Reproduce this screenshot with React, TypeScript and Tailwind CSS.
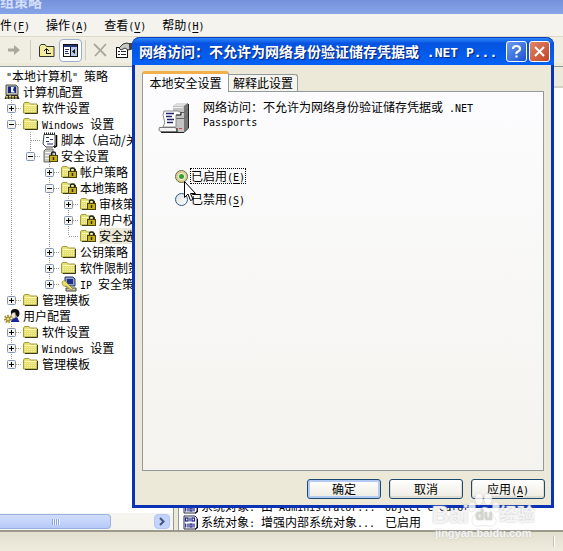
import React, { useState } from 'react';

type Guide = 'none' | 'line' | 'tee' | 'end' | 'plus' | 'plusEnd' | 'minus' | 'minusEnd';
type IconName = 'computer' | 'user' | 'folder' | 'lockFolder' | 'script' | 'server' | 'ipsec';

interface TreeRow {
  guides: Guide[];
  icon: IconName;
  latin?: string;
  label: string;
  selected?: boolean;
}

const rows: TreeRow[] = [
  { guides: [], icon: 'computer', label: '计算机配置' },
  { guides: ['plus'], icon: 'folder', label: '软件设置' },
  { guides: ['minus'], icon: 'folder', latin: 'Windows ', label: '设置' },
  { guides: ['line', 'tee'], icon: 'script', label: '脚本（启动/关机）' },
  { guides: ['line', 'minusEnd'], icon: 'server', label: '安全设置' },
  { guides: ['line', 'none', 'plus'], icon: 'lockFolder', label: '帐户策略' },
  { guides: ['line', 'none', 'minus'], icon: 'lockFolder', label: '本地策略' },
  { guides: ['line', 'none', 'line', 'plus'], icon: 'lockFolder', label: '审核策略' },
  { guides: ['line', 'none', 'line', 'plus'], icon: 'lockFolder', label: '用户权限分配' },
  { guides: ['line', 'none', 'line', 'end'], icon: 'lockFolder', label: '安全选项', selected: true },
  { guides: ['line', 'none', 'plus'], icon: 'folder', label: '公钥策略' },
  { guides: ['line', 'none', 'plus'], icon: 'folder', label: '软件限制策略' },
  { guides: ['line', 'none', 'plusEnd'], icon: 'ipsec', latin: 'IP ', label: '安全策略' },
  { guides: ['plusEnd'], icon: 'folder', label: '管理模板' },
  { guides: [], icon: 'user', label: '用户配置' },
  { guides: ['plus'], icon: 'folder', label: '软件设置' },
  { guides: ['plus'], icon: 'folder', latin: 'Windows ', label: '设置' },
  { guides: ['plusEnd'], icon: 'folder', label: '管理模板' },
];

const menus = [
  { label: '文件', key: 'F' },
  { label: '操作', key: 'A' },
  { label: '查看', key: 'V' },
  { label: '帮助', key: 'H' },
];

// Half-width characters, 6px per cell
function Mono({ children }: { children: React.ReactNode }) {
  return (
    <span className="whitespace-pre font-['DejaVu_Sans_Mono',monospace] text-[10px] leading-none">{children}</span>
  );
}

function Mnemonic({ letter }: { letter: string }) {
  return (
    <Mono>
      (<span className="underline underline-offset-2">{letter}</span>)
    </Mono>
  );
}

function GuideCell({ kind }: { kind: Guide }) {
  if (kind === 'none') return <span className="w-[19px] shrink-0" />;
  const box = kind.startsWith('plus') || kind.startsWith('minus');
  const last = kind === 'end' || kind === 'plusEnd' || kind === 'minusEnd';
  return (
    <svg width="19" height="16" viewBox="0 0 19 16" className="shrink-0">
      <path d={last ? 'M9.5 0V8' : 'M9.5 0V16'} stroke="#9a9a9a" strokeDasharray="1 1" />
      {kind !== 'line' && <path d="M10 8.5H19" stroke="#9a9a9a" strokeDasharray="1 1" />}
      {box && (
        <>
          <rect x="5.5" y="4.5" width="8" height="8" rx="1" fill="#f4f3ee" stroke="#8295b0" />
          <path d="M7 8.5H12" stroke="#000" />
        </>
      )}
      {kind.startsWith('plus') && <path d="M9.5 6V11" stroke="#000" />}
    </svg>
  );
}

function FolderShape() {
  return (
    <>
      <path d="M0.5 4L1.5 2.5H6L7.5 4H14V13H0.5Z" fill="#e6df72" stroke="#a09b3c" />
      <path d="M2 5.5H13.5" stroke="#fffbc0" />
      <path d="M2 7.5H13M2 9.5H13M2 11.5H13" stroke="#f6f0a0" strokeDasharray="1 1" />
      <path d="M14.5 5V13.5H2" fill="none" stroke="#39391c" />
    </>
  );
}

function LockShape() {
  return (
    <>
      <path d="M9.5 8V5.5Q9.5 4 11.5 4T13.5 5.5V8" fill="none" stroke="#222" strokeWidth="1.3" />
      <rect x="7.5" y="7.5" width="8" height="6" fill="#c6b11f" stroke="#4a4208" />
      <path d="M11.5 9V12" stroke="#332d00" strokeWidth="1.5" />
    </>
  );
}

function TreeIcon({ name }: { name: IconName }) {
  return (
    <svg width="16" height="16" viewBox="0 0 16 16" className="shrink-0">
      {name === 'folder' && <FolderShape />}
      {name === 'lockFolder' && (
        <>
          <FolderShape />
          <LockShape />
        </>
      )}
      {name === 'computer' && (
        <>
          <path d="M2 1H12L14 3V11H2Z" fill="#b9b9ad" stroke="#55554e" />
          <rect x="4" y="2.5" width="8" height="6.5" fill="#13278a" />
          <path d="M7 3H10L9 6L11 8.5H7Z" fill="#eef3fa" />
          <path d="M2 11H14L15.5 15H0.5Z" fill="#2d2b25" />
          <path d="M2 12.5H13M2 14H14M3 9L8 13" stroke="#d7cb68" strokeDasharray="2 1" />
        </>
      )}
      {name === 'user' && (
        <>
          <path d="M7 6Q6 1 11 1Q15 1 15.5 5Q15.5 9 13 9L11 5L8 7Z" fill="#0c0c14" />
          <path d="M8 5L11 4L12 9L9 11L7 8Z" fill="#f4e3cc" stroke="#333" strokeWidth="0.5" />
          <path d="M7 12L13 9L15.5 14H7Z" fill="#16259b" />
          <circle cx="4" cy="11" r="3" fill="none" stroke="#a49430" strokeWidth="2.4" strokeDasharray="1.6 1" />
          <circle cx="4" cy="11" r="2" fill="#ead98a" stroke="#8a7a22" />
        </>
      )}
      {name === 'script' && (
        <>
          <path d="M2 2.5H13V13L11 15H4L1 12Z" fill="#fff" stroke="#444" />
          <path d="M14.5 3V14L12 15.5" fill="none" stroke="#000" strokeWidth="1.5" />
          <path d="M2 1.5H14" stroke="#222" strokeWidth="2" strokeDasharray="1 1" />
          <path d="M4 5.5H7M8 7.5H11M4 9.5H7M5 12H11" stroke="#233077" strokeWidth="1.2" />
        </>
      )}
      {name === 'server' && (
        <>
          <path d="M2 3L4 1H11V12L9 14H2Z" fill="#c3c3bd" stroke="#6d6d68" />
          <path d="M3 4.5H9M3 7.5H9M3 10.5H9" stroke="#f7f7f4" />
          <LockShape />
        </>
      )}
      {name === 'ipsec' && (
        <>
          <path d="M4 1H12L14 3V10H4Z" fill="#8fa3cc" stroke="#26315c" />
          <rect x="6" y="3" width="6" height="5" fill="#1c318e" />
          <path d="M5 12H15V15H5Z" fill="#c9c9bf" stroke="#44443f" />
          <path d="M1 6Q4 3 6 7L12 13L10 14L5 10Q1 11 1 6Z" fill="#ece069" stroke="#8a8020" strokeWidth="0.7" />
        </>
      )}
    </svg>
  );
}

function Tree() {
  return (
    <ul className="min-h-0 flex-1 overflow-hidden whitespace-nowrap pl-0.5 pt-px">
      <li className="h-4 pl-1 leading-4">
        <Mono>"</Mono>本地计算机<Mono>" </Mono>策略
      </li>
      {rows.map((row, i) => (
        <li key={i} className="flex h-4 items-center leading-4">
          {row.guides.map((g, j) => (
            <GuideCell key={j} kind={g} />
          ))}
          <span className="flex w-[21px] shrink-0 pl-0.5">
            <TreeIcon name={row.icon} />
          </span>
          <span className={row.selected ? 'bg-[#ece9d8]' : ''}>
            {row.latin && <Mono>{row.latin}</Mono>}
            {row.label}
          </span>
        </li>
      ))}
    </ul>
  );
}

function Toolbar() {
  return (
    <div className="flex h-[27px] items-center border-t border-[#dcd9c9] bg-[#f0eee3] pl-[7px]">
      <button aria-label="前进" className="flex h-6 w-4 items-center">
        <svg width="14" height="12" viewBox="0 0 14 12">
          <path d="M1 4.5H7V1L13 6L7 11V7.5H1Z" fill="#aaa89d" />
        </svg>
      </button>
      <span className="ml-[7px] h-5 w-px bg-[#cfccbb]" />
      <button aria-label="向上" className="ml-2 flex h-6 w-4 items-center">
        <svg width="16" height="15" viewBox="0 0 16 15">
          <path d="M0.5 3.5L2 1.5H6L7.5 3.5H15V13.5H0.5Z" fill="#f3ed9b" stroke="#333" />
          <path d="M7.5 11V6M5 8L7.5 5.5L10 8M7.5 10.5H12" fill="none" stroke="#111" />
        </svg>
      </button>
      <button
        aria-label="显示/隐藏控制台树"
        className="ml-1 flex h-[23px] w-[23px] items-center justify-center rounded-sm border border-[#98aecb] bg-white"
      >
        <svg width="15" height="13" viewBox="0 0 15 13">
          <rect x="0.5" y="0.5" width="14" height="12" fill="#fff" stroke="#111" />
          <rect x="1" y="1" width="13" height="2" fill="#23357a" />
          <path d="M7.5 3V12" stroke="#111" />
          <path d="M2 5.5H6M2 7.5H5M2 9.5H6" stroke="#23357a" />
          <rect x="8" y="3" width="6" height="9" fill="#b9c9e8" />
          <path d="M12 5V10L9 7.5Z" fill="#111" />
        </svg>
      </button>
      <span className="ml-[3px] h-5 w-px bg-[#cfccbb]" />
      <button aria-label="删除" className="ml-[7px] flex h-6 w-4 items-center">
        <svg width="15" height="14" viewBox="0 0 15 14">
          <path d="M1 1L13 13M13 1L2 13" stroke="#aaa89d" strokeWidth="1.8" />
        </svg>
      </button>
      <button aria-label="属性" className="ml-[7px] flex h-6 w-4 items-center">
        <svg width="17" height="16" viewBox="0 0 17 16" className="shrink-0">
          <rect x="0.5" y="5.5" width="11" height="10" fill="#fff" stroke="#111" />
          <path d="M2 9.5H4M5 9.5H10M2 12.5H4M5 12.5H10" stroke="#222" />
          <path d="M3 6L7 2L11 1L16 3V7L12 8L9 6L5 8Z" fill="#c8c8c3" stroke="#333" />
          <path d="M13 1H16V7H13Z" fill="#3d4250" />
        </svg>
      </button>
    </div>
  );
}

function HScroll() {
  return (
    <div className="flex h-[17px] items-center bg-[#f5f4ef] pr-[3px]">
      <div className="flex h-[15px] w-[111px] items-center justify-center gap-px rounded-r-sm border border-l-0 border-[#98b1e4] bg-linear-to-b from-[#d2defd] to-[#b7c9f8]">
        {[0, 1, 2, 3].map(n => (
          <span key={n} className="h-1.5 w-px bg-[#8fa5dc] shadow-[1px_0_0_#eef3ff]" />
        ))}
      </div>
      <button
        aria-label="向右滚动"
        className="ml-auto flex h-[15px] w-4 items-center justify-center rounded-sm border border-[#b4c7f3] bg-[#c3d3fd]"
      >
        <svg width="8" height="9" viewBox="0 0 8 9">
          <path d="M2 1L5.5 4.5L2 8" fill="none" stroke="#42557f" strokeWidth="2" />
        </svg>
      </button>
    </div>
  );
}

function PolicyIcon() {
  return (
    <svg width="16" height="15" viewBox="0 0 16 15" className="shrink-0">
      <path d="M1 1H12L14 3V12L12 14H1Z" fill="#fff" stroke="#2b2b45" />
      <path d="M14.5 4V13L12 14.5" fill="none" stroke="#111" />
      <g fill="none" stroke="#1c2488" strokeWidth="1.2">
        <rect x="2.5" y="3" width="2.5" height="3" />
        <path d="M7 2.5V6.5M5 8.5V12.5M11 8.5V12.5" />
        <rect x="9" y="3" width="2.5" height="3" />
        <rect x="7" y="9" width="2" height="3" />
        <path d="M2.7 8.5V12.5" />
      </g>
    </svg>
  );
}

function PolicyList() {
  return (
    <div className="flex min-w-0 flex-1 flex-col border-l border-t border-[#8f9a9f] bg-white">
      <div className="h-[21px] shrink-0 border-b-2 border-[#d6d2c2] bg-[#ebeadb]" />
      <table className="mt-auto w-full table-fixed border-collapse">
        <colgroup>
          <col className="w-[206px]" />
          <col />
        </colgroup>
        <tbody>
          {[
            ['系统对象', '由', ' Administrator...', 'Object creator'],
            ['系统对象', '增强内部系统对象', '...', '已启用'],
          ].map(([group, text, tail, value], i) => (
            <tr key={i} className="h-4 whitespace-nowrap leading-4">
              <td className="p-0">
                <div className="flex items-center pl-1">
                  <PolicyIcon />
                  <span className="ml-0.5">
                    {group}
                    <Mono>: </Mono>
                    {text}
                    <Mono>{tail}</Mono>
                  </span>
                </div>
              </td>
              <td className="p-0">{i === 0 ? <Mono>{value}</Mono> : value}</td>
            </tr>
          ))}
        </tbody>
      </table>
    </div>
  );
}

function ServerScroll() {
  return (
    <svg width="32" height="32" viewBox="0 0 32 32" className="shrink-0">
      <path d="M15 4L19 1H30V26L26 30H15Z" fill="#b4b4b4" />
      <path d="M15 4L19 1H30L26 4Z" fill="#dedede" />
      <path d="M26 4L30 1V26L26 30Z" fill="#777" />
      <path d="M15 4H26V30H15Z" fill="#c4c4c4" />
      <path d="M15 10.5H26L30 7M15 16.5H26L30 13" fill="none" stroke="#636363" />
      <path d="M15 5.5H25M15 12H25" stroke="#eee" />
      <path d="M30.5 2V26L26 30.5H16" fill="none" stroke="#222" />
      <path d="M21 26.5H24" stroke="#c44" />
      <path d="M6 9H20Q23 9 23 13H18V25H5Q8 21 6 17T6 9Z" fill="#fff" stroke="#8a8a8a" />
      <path d="M18 13H23V10" fill="none" stroke="#222" />
      <path d="M8 11.5H16M8 14.5H14M9 17.5H16M9 20.5H15" stroke="#23236e" strokeWidth="1.3" />
      <path d="M1.5 25.5H17Q19 26 19 29.5H3Q0 29 1.5 25.5Z" fill="#f4f4f4" stroke="#777" />
      <path d="M3 30.5H19V26" fill="none" stroke="#222" />
    </svg>
  );
}

function CaptionButton({ close }: { close?: boolean }) {
  return (
    <button
      aria-label={close ? '关闭' : '帮助'}
      className={
        'flex h-[21px] w-[21px] shrink-0 items-center justify-center rounded-[3px] border border-white ' +
        (close ? 'bg-linear-to-br from-[#e08468] to-[#c04524]' : 'bg-linear-to-br from-[#6d9cf0] to-[#1c50d0]')
      }
    >
      <svg width="15" height="15" viewBox="0 0 15 15" fill="none" stroke="#fff">
        {close ? (
          <path d="M3 3L12 12M12 3L3 12" strokeWidth="2" />
        ) : (
          <path d="M4 5Q4 2 7.5 2T11 5Q11 6.5 9 7.5T7.5 10M7.5 11.5V13.5" strokeWidth="2.2" />
        )}
      </svg>
    </button>
  );
}

function DialogButton({ children, primary }: { children: React.ReactNode; primary?: boolean }) {
  return (
    <button
      className={
        'h-5 w-[74px] rounded-[3px] border border-[#1d4a73] bg-linear-to-b from-white to-[#edebe2] leading-4 ' +
        (primary ? 'shadow-[inset_0_0_0_2px_#b3cbf3]' : 'shadow-[inset_0_-1px_0_1px_#dedbd0]')
      }
    >
      {children}
    </button>
  );
}

function PolicyDialog() {
  const [enabled, setEnabled] = useState(true);
  const radio =
    "relative h-[13px] w-[13px] appearance-none rounded-full border border-[#2c5a86] bg-linear-to-br from-[#dcdfe0] to-white checked:border-[#5c6b3a] checked:shadow-[inset_0_0_0_2px_#e3cd8b] checked:after:absolute checked:after:inset-[3px] checked:after:rounded-full checked:after:bg-[#34a32c] checked:after:content-['']";

  return (
    <div
      role="dialog"
      aria-labelledby="dialog-title"
      className="absolute left-[132px] right-[9px] top-[37px] rounded-t-lg border-x-[3px] border-b-[3px] border-[#0a32b4] bg-[#ece9d8]"
    >
      <div className="-mx-[3px] flex h-7 items-center gap-0.5 rounded-t-lg border-t border-[#0a3fbe] bg-linear-to-b from-[#2f86fb] via-[#0553e0] via-20% to-[#0462f5] pl-[7px] pr-1">
        <h1
          id="dialog-title"
          className="min-w-0 flex-1 overflow-hidden whitespace-nowrap text-[14px] font-bold text-white [text-shadow:1px_1px_1px_#0a1f74]"
        >
          网络访问：不允许为网络身份验证储存凭据或
          <span className="whitespace-pre font-['DejaVu_Sans_Mono',monospace] text-[13px]"> .NET P...</span>
        </h1>
        <CaptionButton />
        <CaptionButton close />
      </div>

      <div className="px-[7px] pt-1.5">
        <div role="tablist" className="relative -mb-px flex items-end">
          <button
            role="tab"
            aria-selected="true"
            className="h-[21px] w-[87px] rounded-t-[3px] border border-b-0 border-t-[3px] border-[#919b9c] border-t-[#f2b04a] bg-[#fcfcfe] leading-4"
          >
            本地安全设置
          </button>
          <button
            role="tab"
            aria-selected="false"
            className="mb-px h-[17px] w-[69px] rounded-tr-[3px] border border-b-0 border-l-0 border-[#919b9c] bg-[#f5f4ee] leading-4"
          >
            解释此设置
          </button>
        </div>
        <div role="tabpanel" className="h-[380px] border border-[#919b9c] bg-linear-to-b from-[#fcfcfe] to-[#f4f3ee] px-[15px] pt-2.5">
          <div className="flex items-center gap-[13px]">
            <ServerScroll />
            <p className="-mt-2 leading-[13px]">
              网络访问：不允许为网络身份验证储存凭据或<Mono> .NET</Mono>
              <br />
              <Mono>Passports</Mono>
            </p>
          </div>
          <div className="mt-[34px] flex flex-col items-start gap-[7px] pl-[17px]">
            <label className="flex items-center">
              <input type="radio" name="state" checked={enabled} onChange={() => setEnabled(true)} className={radio} />
              <span className="ml-0.5 border border-dotted border-black leading-[14px]">
                已启用
                <Mnemonic letter="E" />
              </span>
            </label>
            <label className="flex items-center">
              <input type="radio" name="state" checked={!enabled} onChange={() => setEnabled(false)} className={radio} />
              <span className="ml-0.5 border border-transparent leading-[14px]">
                已禁用
                <Mnemonic letter="S" />
              </span>
            </label>
          </div>
        </div>
      </div>
      <div className="flex justify-end gap-2 pb-1.5 pr-1.5 pt-2">
        <DialogButton primary>确定</DialogButton>
        <DialogButton>取消</DialogButton>
        <DialogButton>
          应用
          <Mnemonic letter="A" />
        </DialogButton>
      </div>

      {/* Mouse pointer */}
      <svg width="13" height="21" viewBox="0 0 13 21" className="absolute left-[49px] top-[144px]">
        <path d="M0.5 0.5V16.5L4 13L6.5 19.5L9 18.5L6.5 12.5H11.5Z" fill="#fff" stroke="#000" />
      </svg>
    </div>
  );
}

function Watermark() {
  return (
    <div className="pointer-events-none absolute bottom-3 right-7 flex flex-col items-center font-['Liberation_Sans','Noto_Sans_CJK_SC',sans-serif] font-bold text-white/80 [text-shadow:0_0_2px_#b8b8b8]">
      <div className="flex items-center text-[24px] leading-6">
        <span>Bai</span>
        <span className="relative flex h-6 w-[30px] items-center justify-center text-[14px] text-[#d4d4cc]">
          <svg
            width="34"
            height="38"
            viewBox="0 0 34 38"
            className="absolute -left-0.5 -top-3"
            fill="#fff"
            stroke="#d0d0d0"
            strokeWidth="0.5"
            opacity="0.8"
          >
            <ellipse cx="5" cy="16" rx="3.5" ry="5" />
            <ellipse cx="12" cy="8" rx="4" ry="6" />
            <ellipse cx="21" cy="8" rx="4" ry="6" />
            <ellipse cx="29" cy="16" rx="3.5" ry="5" />
            <path d="M17 16Q22 16 24 21T29 28Q30 36 22 35Q17 34 12 35Q4 36 5 28Q6 25 10 21T17 16Z" />
          </svg>
          <span className="relative">du</span>
        </span>
        <span className="text-[18px]">经验</span>
      </div>
      <span className="text-[11px] leading-3">jingyan.baidu.com</span>
    </div>
  );
}

export default function App() {
  return (
    <div className="relative flex h-screen flex-col overflow-hidden bg-[#ece9d8] font-['Noto_Sans_CJK_SC',sans-serif] text-[12px] leading-4 text-black">
      <header className="flex h-[14px] shrink-0 items-center bg-linear-to-b from-[#7691dc] to-[#87a4e8]">
        <span className="pb-3 text-[14px] font-bold text-[#d5dffa]">组策略</span>
      </header>
      <nav className="-ml-3 flex h-[22px] shrink-0 items-center gap-4 whitespace-nowrap bg-[#f4f3ee]">
        {menus.map(m => (
          <button key={m.key} className="leading-4">
            {m.label}
            <Mnemonic letter={m.key} />
          </button>
        ))}
      </nav>
      <Toolbar />
      <main className="mt-[3px] flex min-h-0 flex-1 border-b-2 border-[#9b998c]">
        <section className="flex w-[174px] shrink-0 flex-col border-r border-t border-[#8f9a9f] bg-white">
          <Tree />
          <HScroll />
        </section>
        <span className="w-1 shrink-0" />
        <PolicyList />
      </main>
      <footer className="flex h-[19px] shrink-0 justify-end bg-linear-to-b from-[#e2dfcf] to-[#efecde] pr-2">
        <span className="my-1 w-0.5 border-l border-[#c5c2b2] bg-white" />
      </footer>
      <PolicyDialog />
      <Watermark />
    </div>
  );
}
